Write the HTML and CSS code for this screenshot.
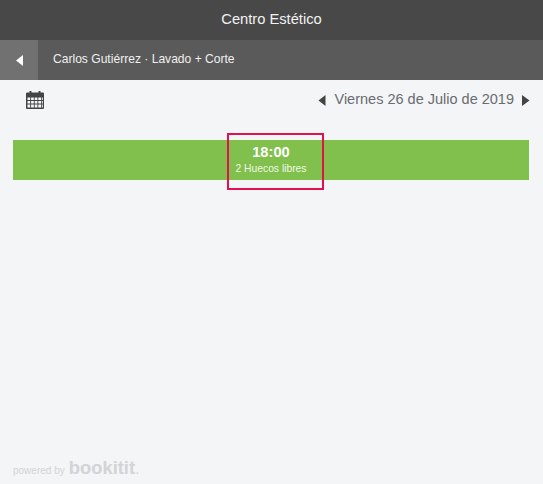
FILE: index.html
```html
<!DOCTYPE html>
<html>
	<head>
		<meta http-equiv="Content-Type" content="text/html; charset=utf-8">
		<title>Centro Estético</title>
		<link rel="stylesheet" href="styles.css">
	</head>
	<body>
		<header class="title-bar">Centro Estético</header>
		<div class="sub-bar">
			<a class="back" href="#">
				<svg width="7" height="11" viewBox="0 0 7 11"><path d="M7 0V11L0 5.500Z" fill="#fff"/></svg>
			</a>
			<span class="sub-text">Carlos Gutiérrez · Lavado + Corte</span>
		</div>
		<main class="content">
			<div class="date-row">
				<svg class="cal" width="18" height="18" viewBox="0 0 18 18">
					<rect x="3.500" y="0" width="2" height="3" fill="#444"/>
					<rect x="12.500" y="0" width="2" height="3" fill="#444"/>
					<path fill="#444" fill-rule="evenodd" d="M1 1.500H17Q18 1.500 18 2.500V17Q18 18 17 18H1Q0 18 0 17V2.500Q0 1.500 1 1.500ZM1.500 6.500V9H4.200V6.500ZM5.100 6.500V9H7.800V6.500ZM8.700 6.500V9H11.400V6.500ZM12.300 6.500V9H15V6.500ZM1.500 10V12.500H4.200V10ZM5.100 10V12.500H7.800V10ZM8.700 10V12.500H11.400V10ZM12.300 10V12.500H15V10ZM1.500 13.500V16.500H4.200V13.500ZM5.100 13.500V16.500H7.800V13.500ZM8.700 13.500V16.500H11.400V13.500ZM12.300 13.500V16.500H15V13.500ZM15.800 6.500V9H16.800V6.500ZM15.800 10V12.500H16.800V10ZM15.800 13.500V16.500H16.800V13.500Z"/>
				</svg>
				<div class="date-nav">
					<svg width="8" height="11" viewBox="0 0 8 11"><path d="M7.500 0V11L0.500 5.500Z" fill="#444"/></svg>
					<span class="date-text">Viernes 26 de Julio de 2019</span>
					<svg width="8" height="11" viewBox="0 0 8 11"><path d="M0 0V11L7.500 5.500Z" fill="#444"/></svg>
				</div>
			</div>
			<div class="slot">
				<div class="slot-time">18:00</div>
				<div class="slot-free">2 Huecos libres</div>
				<div class="slot-mark"></div>
			</div>
		</main>
		<footer class="powered">
			<span class="powered-by">powered by</span>
			<span class="brand">bookitit</span><span class="brand-dot">.</span>
		</footer>
	</body>
</html>
```
FILE: styles.css
```css
html, body {
	height: 100%;
}

body {
	margin: 0;
	padding: 0;
	overflow: hidden;
	display: flex;
	flex-direction: column;
	background: #f3f5f7;
	font-family: "Liberation Sans", Arial, sans-serif;
}

.title-bar {
	height: 40px;
	line-height: 38px;
	text-align: center;
	font-size: 14.7px;
	color: #f2f2f2;
	background: #484848;
}

.sub-bar {
	height: 40px;
	display: flex;
	align-items: center;
	background: #5a5a5a;
}

.back {
	width: 38px;
	height: 40px;
	display: flex;
	align-items: center;
	justify-content: center;
	background: #717171;
}

.sub-text {
	margin-left: 15px;
	margin-top: -3px;
	font-size: 12.08px;
	color: #f0f0f0;
}

.content {
	flex: 1;
}

.date-row {
	display: flex;
	justify-content: space-between;
	align-items: center;
	height: 40px;
	padding: 0 13px 0 26px;
}

.date-nav {
	display: flex;
	align-items: center;
	gap: 8px;
}

.date-text {
	margin-top: -2px;
	font-size: 14.5px;
	color: #6a6c70;
}

.slot {
	position: relative;
	margin: 20px 14px 0 13px;
	height: 40px;
	text-align: center;
	color: #fff;
	background: #82c04e;
}

.slot-time {
	padding-top: 4px;
	font-size: 14.7px;
	line-height: 17px;
	font-weight: bold;
}

.slot-free {
	margin-top: 2px;
	font-size: 10.3px;
	line-height: 12px;
	color: #eef8e4;
}

/* red box around the selected hour */
.slot-mark {
	position: absolute;
	left: 214px;
	top: -7px;
	width: 93px;
	height: 53px;
	border: 2px solid #e2104f;
}

.powered {
	display: flex;
	align-items: baseline;
	gap: 4px;
	padding: 0 0 6px 13px;
	color: #d2d4d6;
}

.powered-by {
	font-size: 10px;
}

.brand {
	font-size: 18.4px;
	font-weight: bold;
	line-height: 20px;
}

.brand-dot {
	font-size: 10px;
	font-weight: bold;
	margin-left: -3px;
}
```
